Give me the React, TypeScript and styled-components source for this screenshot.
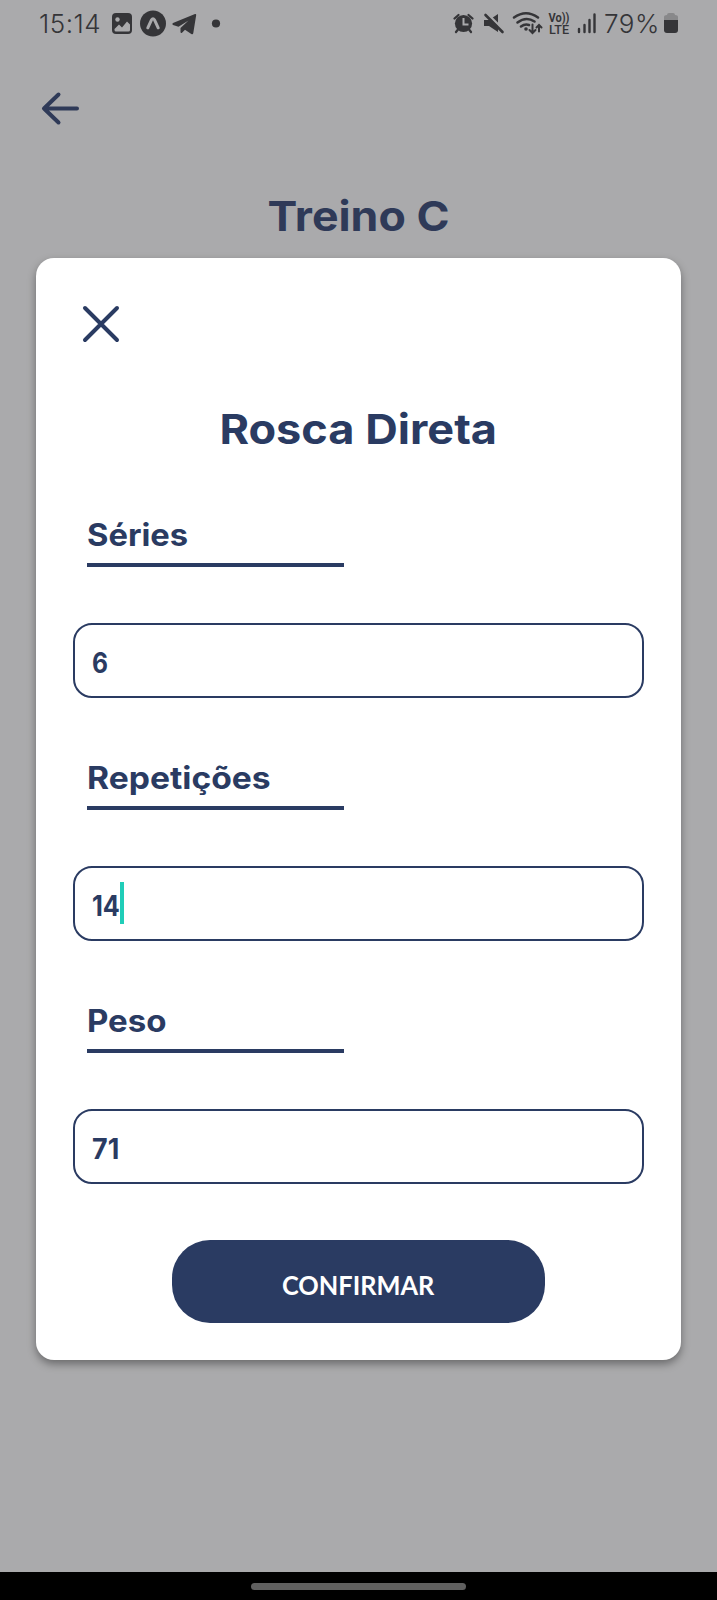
import React from "react";
import styled, { createGlobalStyle } from "styled-components";

const navy = "#2a3b62";
const ink = "#353538";

const GlobalStyle = createGlobalStyle`
  *, *::before, *::after { box-sizing: border-box; }
  body { margin: 0; background: #aaaaac; }
`;

const Screen = styled.main`
  position: relative;
  display: flex;
  flex-direction: column;
  width: 717px;
  height: 1600px;
  overflow: hidden;
  background: #aaaaac;
  font-family: Inter, "Open Sans", sans-serif;
`;

const StatusBar = styled.div`
  display: flex;
  justify-content: space-between;
  height: 48px;
  padding: 0 38px 0 39px;
  color: ${ink};
`;

const StatusGroup = styled.div`
  display: flex;
  align-items: flex-start;
`;

const StatusText = styled.span<{ $width: number }>`
  width: ${(p) => p.$width}px;
  padding-top: 9px;
  font: 300 26px/30px Inter, sans-serif;
  letter-spacing: 0.5px;
  white-space: nowrap;
`;

const StatusIcon = styled.svg`
  display: block;
  height: 48px;
`;

const BackButton = styled.button`
  display: block;
  width: 44px;
  height: 40px;
  margin: 40px 0 0 38px;
  padding: 0;
  border: 0;
  background: none;
`;

const Heading = styled.h1<{ $color: string }>`
  margin: 0;
  color: ${(p) => p.$color};
  font-size: 41px;
  font-weight: 700;
  line-height: 50px;
  text-align: center;
  white-space: nowrap;
`;

const PageHeading = styled.header`
  margin-top: 63px;
`;

const Stretch = styled.span<{ $scale: number; $origin?: string }>`
  display: inline-block;
  transform: scaleX(${(p) => p.$scale});
  transform-origin: ${(p) => p.$origin ?? "center"};
`;

const Modal = styled.section`
  position: absolute;
  top: 258px;
  left: 36px;
  display: flex;
  flex-direction: column;
  width: 645px;
  height: 1102px;
  padding: 43px 37px 37px;
  border-radius: 18px;
  background: #fff;
  box-shadow: 0 4px 9px rgba(0, 0, 0, 0.38);
`;

const CloseButton = styled.button`
  flex-shrink: 0;
  width: 46px;
  height: 46px;
  margin: 0 0 57px 5px;
  padding: 0;
  border: 0;
  background: none;
`;

const ModalHeading = styled.div`
  flex-shrink: 0;
  height: 50px;
  margin-bottom: 59px;
`;

const FieldList = styled.div`
  display: flex;
  flex-direction: column;
  gap: 58px;
`;

const Field = styled.label`
  display: block;
  height: 185px;
`;

const FieldLabel = styled.span`
  display: block;
  width: 257px;
  height: 54px;
  margin-left: 14px;
  border-bottom: 4px solid ${navy};
  color: ${navy};
  font-size: 31px;
  font-weight: 700;
  line-height: 44px;
  white-space: nowrap;
`;

const FieldBox = styled.span`
  display: flex;
  align-items: center;
  height: 75px;
  margin-top: 56px;
  padding: 4px 17px 0;
  border: 2px solid ${navy};
  border-radius: 19px;
  color: ${navy};
  font: 700 28px/42px Inter, sans-serif;
`;

const FieldValue = styled.span`
  position: relative;
`;

const Caret = styled.span`
  position: absolute;
  top: -3px;
  left: 28px;
  width: 4px;
  height: 42px;
  background: #20cdb8;
`;

const ConfirmButton = styled.button`
  flex-shrink: 0;
  width: 373px;
  height: 83px;
  margin: auto auto 0;
  padding: 6px 0 0;
  border: 0;
  border-radius: 38px;
  background: ${navy};
  color: #fff;
  font: 700 26px/32px Lato, sans-serif;
`;

const NavigationBar = styled.footer`
  display: flex;
  justify-content: center;
  height: 28px;
  margin-top: auto;
  padding-top: 11px;
  background: #000;
`;

const HomeIndicator = styled.span`
  width: 215px;
  height: 7px;
  border-radius: 4px;
  background: #606060;
`;

const fields = [
  { label: "Séries", value: "6", scale: 1.055, valueScale: 0.88 },
  { label: "Repetições", value: "14", scale: 1.085, valueScale: 0.9, focused: true },
  { label: "Peso", value: "71", scale: 1.065, valueScale: 0.96 },
];

function LeftStatusIcons() {
  return (
    <StatusIcon width="118" viewBox="108 0 118 48" fill={ink}>
      <rect x="112" y="13" width="20" height="21" rx="4" />
      <circle cx="117.5" cy="19.5" r="2.2" fill="#aaaaac" />
      <path d="M114.500 29l4.500-4.500 3 3 5-6 3 3v5.500a1.500 1.500 0 0 1-1.500 1.500h-12.500a1.500 1.500 0 0 1-1.500-1.500z" fill="#aaaaac" />
      <circle cx="153" cy="23.5" r="13" />
      <path d="M147.800 27.800l3.700-8q1.500-2 3 0l3.700 8" fill="none" stroke="#aaaaac" strokeWidth="3" strokeLinecap="round" strokeLinejoin="round" />
      <path d="M173 23L195 14q1.300-.3 1.200 1L193.300 33q-.3 2-2 1l-6.300-4.300-3 3q-1.300 1-1.500-.7v-4l8-7.500-10 6.200-5.500-1.700q-1.500-1 0-2z" />
      <circle cx="216" cy="23.500" r="4.100" />
    </StatusIcon>
  );
}

function RightStatusIcons() {
  return (
    <StatusIcon width="152" viewBox="452 0 152 48" fill={ink}>
      <circle cx="463.500" cy="23.500" r="8.600" />
      <path d="M454.500 18.500l4-3.500M468.500 15l4 3.500M458 29.500l-2 2.500M469 29.500l2 2.500" stroke={ink} strokeWidth="2.300" strokeLinecap="round" />
      <path d="M463.500 18v6.500h5" fill="none" stroke="#aaaaac" strokeWidth="2" />
      <path d="M484 20h5l9-6v18l-9-6h-5z" />
      <path d="M487 13.500l17 17" stroke="#aaaaac" strokeWidth="2.500" />
      <path d="M485.500 15l17 17" stroke={ink} strokeWidth="2.600" strokeLinecap="round" />
      <g fill="none" stroke={ink} strokeWidth="2.600" strokeLinecap="round">
        <path d="M514 17.500Q526 9 538 17.500M517.500 22.500Q526 16 534.500 21.500M521 26.500Q525 23.500 529 25" />
        <path d="M532.500 24.500v8M529.500 30l3 3 3-3M539 31.500v-6M536.500 27.500l2.500-2.500 2.500 2.500" strokeWidth="2" />
      </g>
      <circle cx="526" cy="29" r="1.800" />
      <text x="548.500" y="22" fontFamily="Roboto, sans-serif" fontWeight="700" fontSize="12" textLength="21" lengthAdjust="spacingAndGlyphs">Vo))</text>
      <text x="549" y="33.500" fontFamily="Roboto, sans-serif" fontWeight="500" fontSize="12" textLength="20" lengthAdjust="spacingAndGlyphs">LTE</text>
      <path d="M579 29v3M584.500 25v7M589.500 20v12M594.500 14.500v17.500" stroke={ink} strokeWidth="2.400" strokeLinecap="round" />
    </StatusIcon>
  );
}

function Battery() {
  return (
    <StatusIcon width="16" viewBox="663 0 16 48" fill={ink}>
      <path d="M664 20v-3q0-2 3-2 0-2 2-2h4q2 0 2 2 3 0 3 2v3z" fill="#88888a" />
      <path d="M664 20h14v10q0 3-3 3h-8q-3 0-3-3z" />
    </StatusIcon>
  );
}

export default function App() {
  return (
    <Screen>
      <GlobalStyle />
      <StatusBar>
        <StatusGroup>
          <StatusText $width={69}>15:14</StatusText>
          <LeftStatusIcons />
        </StatusGroup>
        <StatusGroup>
          <RightStatusIcons />
          <StatusText $width={59}>79%</StatusText>
          <Battery />
        </StatusGroup>
      </StatusBar>

      <BackButton aria-label="Voltar">
        <svg width="44" height="40" fill="none" stroke="#2f3a58" strokeWidth="4" strokeLinecap="round" strokeLinejoin="round">
          <path d="M39 20.500H6M20.500 6.500l-14.500 14 14.500 14" />
        </svg>
      </BackButton>
      <PageHeading>
        <Heading $color="#2f3a58"><Stretch $scale={1.09}>Treino C</Stretch></Heading>
      </PageHeading>

      <Modal role="dialog">
        <CloseButton aria-label="Fechar">
          <svg width="46" height="46" fill="none" stroke={navy} strokeWidth="4" strokeLinecap="round">
            <path d="M7 7l32 32M39 7L7 39" />
          </svg>
        </CloseButton>
        <ModalHeading>
          <Heading as="h2" $color={navy}><Stretch $scale={1.1}>Rosca Direta</Stretch></Heading>
        </ModalHeading>
        <FieldList>
          {fields.map((field) => (
            <Field key={field.label}>
              <FieldLabel><Stretch $scale={field.scale} $origin="left">{field.label}</Stretch></FieldLabel>
              <FieldBox>
                <FieldValue>
                  <Stretch $scale={field.valueScale} $origin="left">{field.value}</Stretch>
                  {field.focused && <Caret />}
                </FieldValue>
              </FieldBox>
            </Field>
          ))}
        </FieldList>
        <ConfirmButton><Stretch $scale={0.975}>CONFIRMAR</Stretch></ConfirmButton>
      </Modal>

      <NavigationBar><HomeIndicator /></NavigationBar>
    </Screen>
  );
}
